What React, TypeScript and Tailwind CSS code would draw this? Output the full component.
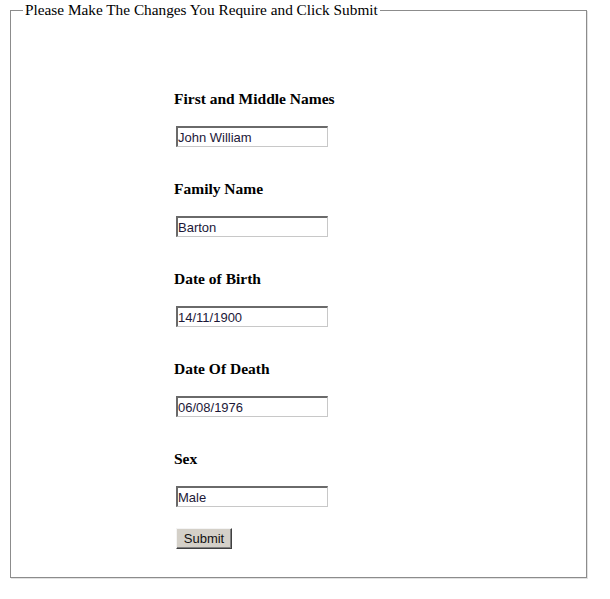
import React from "react";

const fields = [
  { label: "First and Middle Names", value: "John William" },
  { label: "Family Name", value: "Barton" },
  { label: "Date of Birth", value: "14/11/1900" },
  { label: "Date Of Death", value: "06/08/1976" },
  { label: "Sex", value: "Male" },
];

export default function App() {
  return (
    <div className="w-[610px] h-[599px] bg-white font-['Liberation_Serif',serif] text-black">
      <fieldset className="ml-[10px] mt-[1px] w-[577px] border border-[#8c8c8c] p-0 shadow-[1px_1px_0_#e2e2e2]">
        <legend className="ml-[12px] px-[2px] text-[15.3px] leading-[18px]">
          Please Make The Changes You Require and Click Submit
        </legend>
        <div className="pt-[71px] pl-[163px] pb-[28px]">
          {fields.map((f, i) => (
            <div key={i} className={i === 0 ? "" : "mt-[33px]"}>
              <div className="text-[15.5px] font-bold leading-[18px]">{f.label}</div>
              <input
                type="text"
                defaultValue={f.value}
                className="mt-[18px] ml-[2px] block w-[152px] h-[21px] border-t-2 border-l-2 border-r border-b border-t-[#6a6a6a] border-l-[#6a6a6a] border-r-[#c8c8c8] border-b-[#c8c8c8] px-0 font-['Liberation_Sans',Arial,sans-serif] text-[13px] leading-[18px] text-[#1c1838] outline-none"
              />
            </div>
          ))}
          <button
            type="button"
            className="mt-[21px] ml-[2px] block w-[56px] h-[21px] bg-[#d4d0c8] border border-t-[#f4f4f4] border-l-[#f4f4f4] border-r-[#404040] border-b-[#404040] shadow-[inset_-1px_-1px_0_#808080] font-['Liberation_Sans',Arial,sans-serif] text-[13px] leading-[17px] text-[#111]"
          >
            Submit
          </button>
        </div>
      </fieldset>
    </div>
  );
}
